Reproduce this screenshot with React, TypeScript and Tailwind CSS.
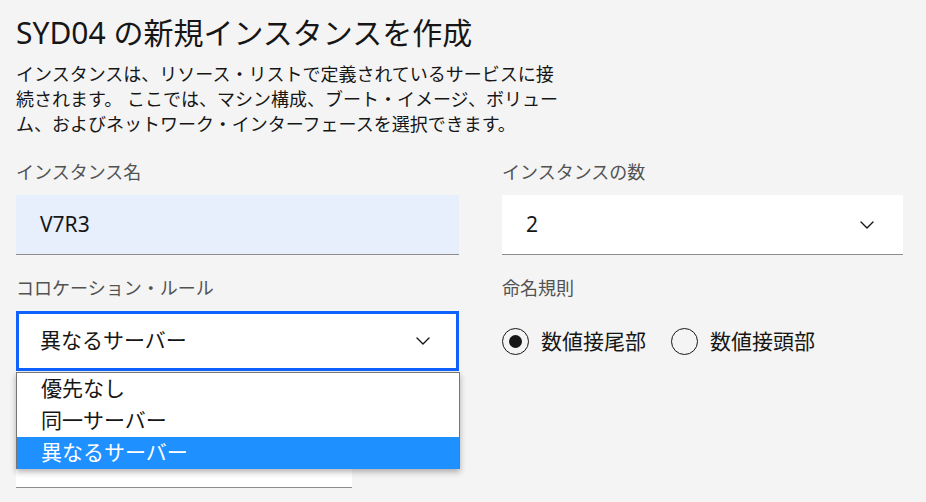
import { ChevronDown } from "lucide-react"

const jp = { fontFamily: '"Noto Sans", "Noto Sans CJK JP", sans-serif' }

function Label({ children }: { children: React.ReactNode }) {
  return <div className="h-[24px] text-[18px] leading-[24px] text-[#525252]">{children}</div>
}

function Radio({ checked, label }: { checked?: boolean; label: string }) {
  return (
    <label className="flex items-center gap-[12px]">
      <span className="flex h-[27px] w-[27px] items-center justify-center rounded-full border-[1.5px] border-[#161616]">
        {checked && <span className="h-[13px] w-[13px] rounded-full bg-[#161616]" />}
      </span>
      <span className="text-[21px] text-[#161616]">{label}</span>
    </label>
  )
}

export default function App() {
  const options = ["優先なし", "同一サーバー", "異なるサーバー"]

  return (
    <div className="h-[502px] w-[926px] overflow-hidden bg-[#f4f4f4] pl-[16px] pt-[13px]" style={jp}>
      {/* Header */}
      <h1 className="text-[30px] leading-[40px] text-[#161616]">SYD04 の新規インスタンスを作成</h1>
      <p className="mt-[9px] w-[550px] text-[18px] leading-[25px] text-[#161616]">
        インスタンスは、リソース・リストで定義されているサービスに接続されます。 ここでは、マシン構成、ブート・イメージ、ボリューム、およびネットワーク・インターフェースを選択できます。
      </p>

      <div className="mt-[23px] grid grid-cols-[443px_401px] gap-x-[43px]">
        {/* Instance name */}
        <div>
          <Label>インスタンス名</Label>
          <div className="mt-[11px] flex h-[60px] items-center border-b border-[#8d8d8d] bg-[#e8effc] px-[24px] text-[21px] text-[#161616]">
            V7R3
          </div>
        </div>

        {/* Instance count */}
        <div>
          <Label>インスタンスの数</Label>
          <div className="mt-[11px] flex h-[60px] items-center justify-between border-b border-[#8d8d8d] bg-white pl-[24px] pr-[24px] text-[21px] text-[#161616]">
            2
            <ChevronDown size={24} strokeWidth={1.4} />
          </div>
        </div>

        {/* Colocation rule */}
        <div className="relative mt-[21px]">
          <Label>コロケーション・ルール</Label>
          <div className="mt-[11px] flex h-[60px] items-center justify-between border-[3px] border-[#0f62fe] bg-white pl-[21px] pr-[21px] text-[21px] text-[#161616]">
            異なるサーバー
            <ChevronDown size={24} strokeWidth={1.4} />
          </div>
          <div className="mt-[57px] h-[60px] w-[336px] border-b border-[#8d8d8d] bg-white" />

          {/* open listbox */}
          <ul className="absolute left-0 top-[96px] z-10 w-[444px] border border-b-0 border-[#767676] bg-white shadow-[0_3px_6px_rgba(0,0,0,0.3)]">
            {options.map((o, i) => (
              <li
                key={o}
                className={`flex h-[32px] items-center px-[24px] text-[21px] ${
                  i === 2 ? "bg-[#1e90ff] text-white" : "text-[#161616]"
                }`}
              >
                {o}
              </li>
            ))}
          </ul>
        </div>

        {/* Naming rule */}
        <div className="mt-[21px]">
          <Label>命名規則</Label>
          <div className="mt-[26px] flex items-center gap-[25px]">
            <Radio checked label="数値接尾部" />
            <Radio label="数値接頭部" />
          </div>
        </div>
      </div>
    </div>
  )
}
